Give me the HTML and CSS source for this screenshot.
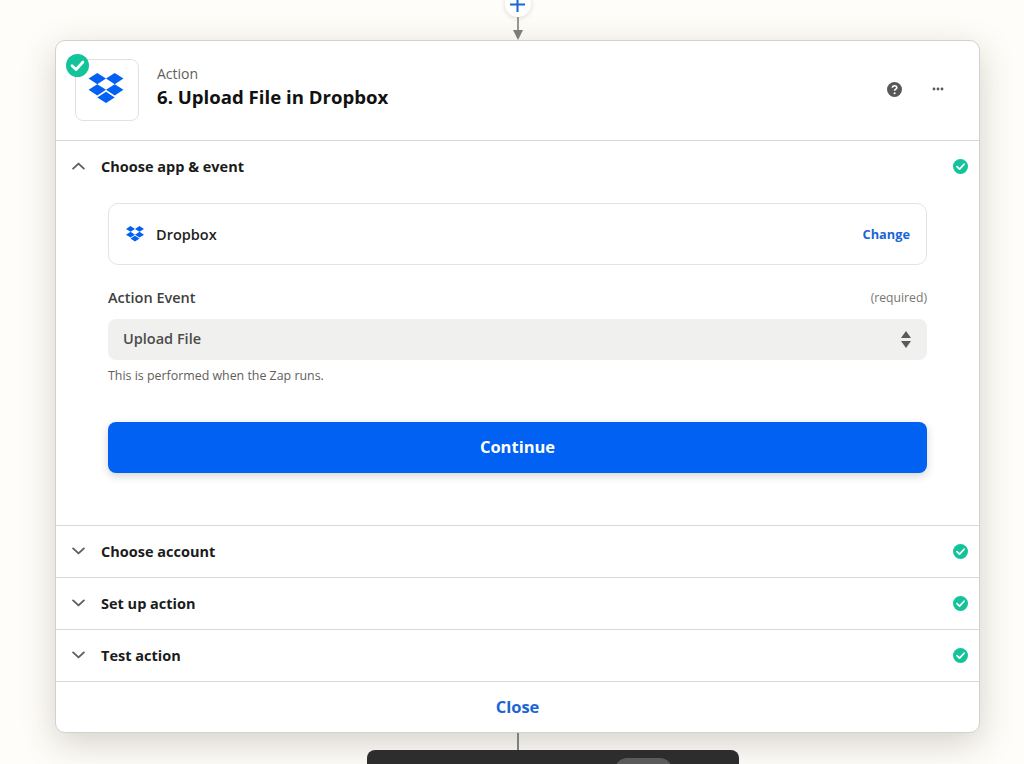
FILE: index.html
```html
<!DOCTYPE html>
<html lang="en">
<head>
<meta charset="utf-8">
<title>Upload File in Dropbox</title>
<link rel="stylesheet" href="styles.css">
</head>
<body>
<svg width="0" height="0" class="defs" aria-hidden="true">
  <symbol id="dropbox" viewBox="0 0 36 32">
    <path d="M9 0 0 5.800l9 5.800-9 5.800 9 5.800 9-5.800 9 5.800 9-5.800-9-5.800 9-5.800L27 0l-9 5.800zM18 5.800l9 5.800-9 5.800-9-5.800zM9 25.200l9-5.800 9 5.800-9 5.800z" fill="#0061f2"/>
  </symbol>
  <symbol id="check" viewBox="0 0 16 16">
    <circle cx="8" cy="8" r="8" fill="#13c39a"/>
    <path d="M4.200 8.200 7 10.800l4.800-5.200" fill="none" stroke="#fff" stroke-width="1.900" stroke-linecap="round" stroke-linejoin="round"/>
  </symbol>
  <symbol id="chev-down" viewBox="0 0 14 8">
    <path d="M1.200 1.200 7 6.600l5.800-5.400" fill="none" stroke="#5f5e5c" stroke-width="2" stroke-linecap="round" stroke-linejoin="round"/>
  </symbol>
</svg>
<div class="canvas">
  <div class="connector-top">
    <div class="plus">
      <svg width="15" height="15" viewBox="0 0 16 16"><path d="M8 0v16M0 8h16" stroke="#1a66d6" stroke-width="2.200"/></svg>
    </div>
    <svg class="arrow" width="12" height="23" viewBox="0 0 12 23"><path d="M6 0v15" stroke="#807f7c" stroke-width="1.600"/><path d="M1 13h10l-5 10z" fill="#807f7c"/></svg>
  </div>

  <main class="card">
    <header class="card-head">
      <div class="app-tile">
        <svg class="tile-logo" width="36" height="31"><use href="#dropbox"/></svg>
        <svg class="tile-badge" width="23" height="23"><use href="#check"/></svg>
      </div>
      <div class="head-text">
        <div class="head-kicker">Action</div>
        <h1 class="head-title">6. Upload File in Dropbox</h1>
      </div>
      <div class="head-tools">
        <svg width="15" height="15" viewBox="0 0 16 16"><circle cx="8" cy="8" r="8" fill="#58585a"/><path d="M5.700 6.200c0-1.400 1-2.200 2.400-2.200s2.300.8 2.300 2c0 1.700-2.300 1.700-2.300 3.400" fill="none" stroke="#fff" stroke-width="1.700"/><circle cx="8.100" cy="12" r="1.100" fill="#fff"/></svg>
        <svg width="12" height="4" viewBox="0 0 12 4"><circle cx="2" cy="2" r="1.400" fill="#58585a"/><circle cx="6" cy="2" r="1.400" fill="#58585a"/><circle cx="10" cy="2" r="1.400" fill="#58585a"/></svg>
      </div>
    </header>

    <section class="step">
      <div class="step-row">
        <svg class="chev chev-up" width="13" height="8"><use href="#chev-down"/></svg>
        <span class="step-name">Choose app &amp; event</span>
        <svg class="step-check" width="15" height="15"><use href="#check"/></svg>
      </div>
      <div class="step-body">
        <div class="app-box">
          <svg width="18" height="16"><use href="#dropbox"/></svg>
          <span class="app-name">Dropbox</span>
          <a class="change">Change</a>
        </div>
        <div class="field-label">
          <span class="label">Action Event</span>
          <span class="required">(required)</span>
        </div>
        <div class="select">
          <span>Upload File</span>
          <svg width="10" height="17" viewBox="0 0 10 17"><path d="M5 0l5 7H0zM0 10h10l-5 7z" fill="#5a5a5a"/></svg>
        </div>
        <p class="hint">This is performed when the Zap runs.</p>
        <button class="continue" type="button">Continue</button>
      </div>
    </section>

    <section class="step">
      <div class="step-row">
        <svg class="chev" width="13" height="8"><use href="#chev-down"/></svg>
        <span class="step-name">Choose account</span>
        <svg class="step-check" width="15" height="15"><use href="#check"/></svg>
      </div>
    </section>
    <section class="step">
      <div class="step-row">
        <svg class="chev" width="13" height="8"><use href="#chev-down"/></svg>
        <span class="step-name">Set up action</span>
        <svg class="step-check" width="15" height="15"><use href="#check"/></svg>
      </div>
    </section>
    <section class="step">
      <div class="step-row">
        <svg class="chev" width="13" height="8"><use href="#chev-down"/></svg>
        <span class="step-name">Test action</span>
        <svg class="step-check" width="15" height="15"><use href="#check"/></svg>
      </div>
    </section>

    <footer class="card-foot">Close</footer>
  </main>

  <div class="connector-bottom"></div>
  <div class="next-card"><span class="next-pill"></span></div>
</div>
</body>
</html>
```
FILE: styles.css
```css
* { box-sizing: border-box; }
html, body { margin: 0; height: 764px; overflow: hidden; }
body {
  background: #fffdf9;
  color: #2d2e2e;
  font-family: "Open Sans", "Noto Sans", sans-serif;
}
.defs { position: absolute; }
.canvas {
  width: 925px;
  height: 764px;
  margin-left: 55px;
  display: flex;
  flex-direction: column;
  align-items: center;
}
.connector-top {
  display: flex;
  flex-direction: column;
  align-items: center;
  margin-top: -9px;
  height: 49px;
  flex: none;
}
.plus {
  width: 26px;
  height: 26px;
  flex: none;
  border-radius: 50%;
  background: #fff;
  box-shadow: 0 1px 5px rgba(60, 55, 45, .18);
  display: flex;
  align-items: center;
  justify-content: center;
}
.arrow { flex: none; margin-left: 1px; }
.card {
  width: 925px;
  height: 693px;
  flex: none;
  background: #fff;
  border: 1px solid #d2d1cd;
  border-radius: 10px;
  box-shadow: 0 10px 34px rgba(60, 55, 40, .22);
  display: flex;
  flex-direction: column;
}
.card-head {
  height: 100px;
  flex: none;
  display: flex;
  align-items: center;
  padding: 0 35px 2px 19px;
  border-bottom: 1px solid #d9d8d5;
}
.app-tile {
  position: relative;
  width: 64px;
  height: 62px;
  flex: none;
  border: 1px solid #e2e1de;
  border-radius: 8px;
  display: flex;
  align-items: center;
  justify-content: center;
}
.tile-logo { margin-top: -2px; margin-left: -2px; }
.tile-badge { position: absolute; left: -10px; top: -6px; }
.head-text { margin: -6px 0 0 18px; flex: 1; }
.head-kicker { font-size: 14px; line-height: 20px; color: #5f5e5c; }
.head-title {
  margin: 0;
  font-size: 18.600px;
  line-height: 26px;
  font-weight: 700;
  color: #111;
}
.head-tools { display: flex; align-items: center; gap: 30px; margin-top: -1px; }
.step { flex: none; border-bottom: 1px solid #d9d8d5; }
.step-row {
  height: 51px;
  display: flex;
  align-items: center;
  padding: 0 11px 1px 16px;
}
.chev { flex: none; }
.chev-up { transform: rotate(180deg); }
.step-name {
  margin-left: 16px;
  flex: 1;
  font-size: 14.500px;
  font-weight: 700;
  color: #1b1b1b;
}
.step-check { flex: none; }
.step-body { height: 333px; padding: 11px 52px 0; }
.app-box {
  height: 62px;
  border: 1px solid #e4e3e0;
  border-radius: 10px;
  display: flex;
  align-items: center;
  padding: 0 16px 0 17px;
}
.app-name {
  margin-left: 12px;
  flex: 1;
  font-size: 14.500px;
  font-weight: 600;
  color: #1f1f1f;
}
.change { font-size: 12.800px; font-weight: 700; color: #1a66d6; }
.field-label {
  display: flex;
  justify-content: space-between;
  align-items: center;
  margin-top: 22px;
  height: 20px;
}
.label { font-size: 14.500px; font-weight: 600; color: #403f3e; }
.required { font-size: 12.200px; color: #77766f; }
.select {
  margin-top: 12px;
  height: 41px;
  border-radius: 8px;
  background: #f0f0ef;
  display: flex;
  align-items: center;
  justify-content: space-between;
  padding: 0 16px 2px 15px;
  font-size: 14.500px;
  font-weight: 600;
  color: #4c4b4a;
}
.select svg { margin-top: 2px; }
.hint { margin: 7px 0 0; font-size: 12.400px; line-height: 18px; color: #5f5e5c; }
.continue {
  display: block;
  width: 100%;
  height: 51px;
  margin-top: 37px;
  padding: 0 0 2px;
  border: 0;
  border-radius: 8px;
  background: #0061f2;
  color: #fff;
  font: 700 16.500px "Open Sans", "Noto Sans", sans-serif;
  box-shadow: 0 3px 8px rgba(40, 40, 40, .2);
}
.card-foot {
  flex: 1;
  display: flex;
  align-items: center;
  justify-content: center;
  font-size: 16.500px;
  font-weight: 700;
  color: #1a66d6;
  padding-bottom: 2px;
}
.connector-bottom { width: 1.500px; height: 17px; flex: none; background: #807f7c; margin-left: 1px; }
.next-card {
  width: 372px;
  height: 31px;
  flex: none;
  align-self: flex-start;
  margin-left: 312px;
  border-radius: 8px 8px 0 0;
  background: #2d2d2d;
  padding: 8px 0 0 248px;
  overflow: hidden;
}
.next-pill { display: block; width: 57px; height: 24px; border-radius: 12px; background: #5b5b5b; }
```
